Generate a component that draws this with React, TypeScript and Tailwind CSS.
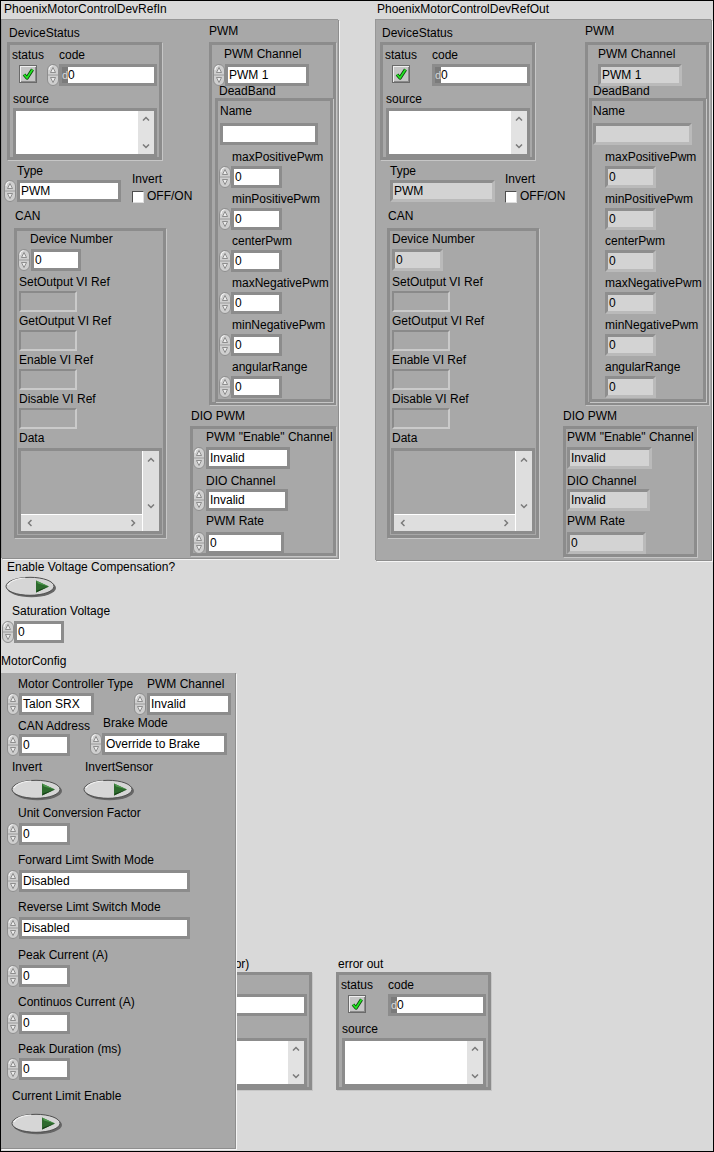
import React from 'react'

const NUMS = ['maxPositivePwm', 'minPositivePwm', 'centerPwm', 'maxNegativePwm', 'minNegativePwm', 'angularRange']

function Lbl({ children, className = '' }: { children?: React.ReactNode; className?: string }) {
  return (
    <div className={`h-[15px] shrink-0 whitespace-nowrap text-[12px] leading-[15px] text-black ${className}`}>
      {children}
    </div>
  )
}

function Spin() {
  return (
    <svg width="12" height="22" viewBox="0 0 12 22" className="shrink-0">
      <rect x="0.5" y="0.5" width="11" height="21" rx="5.5" fill="#cfcfcf" stroke="#8e8e8e" />
      <path d="M2 6 Q2 2 5.5 1.5" stroke="#f6f6f6" fill="none" />
      <line x1="1" y1="11" x2="11" y2="11" stroke="#9c9c9c" />
      <path d="M6 3.5 L8.5 8.5 L3.5 8.5 Z" fill="#ececec" stroke="#7a7a7a" strokeWidth="0.8" />
      <path d="M6 18.5 L8.5 13.5 L3.5 13.5 Z" fill="#ececec" stroke="#7a7a7a" strokeWidth="0.8" />
    </svg>
  )
}

function Field({ text = '', ind, className = '' }: { text?: string; ind?: boolean; className?: string }) {
  return (
    <div
      className={`h-[22px] shrink-0 overflow-hidden whitespace-nowrap border-[3px] pl-[1px] text-[12px] leading-[16px] text-black ${
        ind
          ? 'border-t-[#8e8e8e] border-l-[#8e8e8e] border-r-[#bababa] border-b-[#bababa] bg-[#d3d3d3]'
          : 'border-[#8c8c8c] bg-white'
      } ${className}`}
    >
      {text}
    </div>
  )
}

function Refnum() {
  return (
    <div className="ml-[2px] mt-[1px] h-[21px] w-[58px] border-2 border-t-[#8a8a8a] border-l-[#8a8a8a] border-r-[#cacaca] border-b-[#cacaca]" />
  )
}

function ChevUp() {
  return (
    <svg width="8" height="5" viewBox="0 0 8 5">
      <path d="M1 4.5 L4 1.5 L7 4.5" stroke="#7a7a7a" strokeWidth="1.5" fill="none" />
    </svg>
  )
}

function ChevDown() {
  return (
    <svg width="8" height="5" viewBox="0 0 8 5">
      <path d="M1 0.5 L4 3.5 L7 0.5" stroke="#7a7a7a" strokeWidth="1.5" fill="none" />
    </svg>
  )
}

function ChevLeft() {
  return (
    <svg width="5" height="8" viewBox="0 0 5 8">
      <path d="M4.5 1 L1.5 4 L4.5 7" stroke="#7a7a7a" strokeWidth="1.5" fill="none" />
    </svg>
  )
}

function ChevRight() {
  return (
    <svg width="5" height="8" viewBox="0 0 5 8">
      <path d="M0.5 1 L3.5 4 L0.5 7" stroke="#7a7a7a" strokeWidth="1.5" fill="none" />
    </svg>
  )
}

function StatusLed() {
  return (
    <div className="h-[18px] w-[18px] border border-[#6a6a6a] bg-[#c6c6c6] shadow-[inset_1px_1px_0_#f0f0f0,inset_-1px_-1px_0_#8a8a8a]">
      <svg width="16" height="16" viewBox="0 0 16 16">
        <path d="M4 8.5 L7 12 L12.5 3.5" stroke="#0b4a0b" strokeWidth="3.4" fill="none" strokeLinejoin="round" />
        <path d="M4 8.5 L7 12 L12.5 3.5" stroke="#22e622" strokeWidth="1.7" fill="none" strokeLinejoin="round" />
      </svg>
    </div>
  )
}

function Oval({ className = '' }: { className?: string }) {
  return (
    <svg width="52" height="22" viewBox="0 0 52 22" className={`shrink-0 ${className}`}>
      <ellipse cx="26.5" cy="12" rx="24.5" ry="9.2" fill="#666666" />
      <ellipse cx="25" cy="10.3" rx="24" ry="9" fill="#d6d6d6" stroke="#4e4e4e" />
      <path d="M3 9 Q6 3 20 2" stroke="#f4f4f4" strokeWidth="1.2" fill="none" />
      <path d="M31 4.5 L44 10.5 L31 16.5 Z" fill="#2d6a2d" />
      <path d="M31 4.5 L44 10.5 L33 7.5 Z" fill="#4e9a4e" />
      <path d="M31 16.5 L44 10.5 L32 14.5 Z" fill="#173f17" />
    </svg>
  )
}

function CheckBox() {
  return (
    <div className="h-[12px] w-[12px] border border-t-[#4e4e4e] border-l-[#4e4e4e] border-r-[#dedede] border-b-[#dedede] bg-white" />
  )
}

function CodeField() {
  return (
    <div className="flex h-[22px] w-[98px] shrink-0 border-[3px] border-[#8c8c8c] bg-white">
      <div className="w-[6px] overflow-hidden bg-[#7b7b7b] text-[11px] leading-[16px] text-[#d6d6d6]">d</div>
      <div className="text-[12px] leading-[16px] text-black">0</div>
    </div>
  )
}

function SourceBox() {
  return (
    <div className="flex h-[49px] w-[144px] border-[3px] border-[#8c8c8c] bg-white">
      <div className="flex-1" />
      <div className="flex w-[16px] flex-col items-center justify-between bg-[#e2e2e2] py-[5px]">
        <ChevUp />
        <ChevDown />
      </div>
    </div>
  )
}

function DataBox() {
  return (
    <div className="ml-[1px] mt-[2px] flex h-[86px] w-[144px] border-[3px] border-[#8c8c8c] bg-[#a8a8a8]">
      <div className="flex flex-1 flex-col">
        <div className="flex-1" />
        <div className="flex h-[17px] items-center justify-between border-t border-white bg-[#dedede] px-[6px]">
          <ChevLeft />
          <ChevRight />
        </div>
      </div>
      <div className="flex w-[17px] flex-col items-center justify-between border-l border-white bg-[#dedede] pb-[22px] pt-[6px]">
        <ChevUp />
        <ChevDown />
      </div>
    </div>
  )
}

function ErrorCluster({ ctl }: { ctl?: boolean }) {
  return (
    <div className="h-[118px] w-[155px] border-[3px] border-[#8c8c8c] bg-[#a8a8a8] shadow-[1px_1px_0_#c6c6c6]">
      <div className="ml-[2px] mt-[3px] flex">
        <Lbl className="w-[47px]">status</Lbl>
        <Lbl>code</Lbl>
      </div>
      <div className="mt-[1px] flex items-start">
        <div className="ml-[9px] mt-[1px]">
          <StatusLed />
        </div>
        {ctl ? (
          <div className="ml-[10px] flex">
            <Spin />
            <CodeField />
          </div>
        ) : (
          <div className="ml-[22px]">
            <CodeField />
          </div>
        )}
      </div>
      <Lbl className="ml-[3px] mt-[6px]">source</Lbl>
      <div className="ml-[3px] mt-[1px]">
        <SourceBox />
      </div>
    </div>
  )
}

function InvertBox({ className = '' }: { className?: string }) {
  return (
    <div className={`flex flex-col ${className}`}>
      <Lbl className="mt-[8px]">Invert</Lbl>
      <div className="mt-[2px] flex items-center">
        <CheckBox />
        <Lbl className="ml-[3px]">OFF/ON</Lbl>
      </div>
    </div>
  )
}

function CanRefs() {
  return (
    <>
      {['SetOutput VI Ref', 'GetOutput VI Ref', 'Enable VI Ref', 'Disable VI Ref'].map((n, i) => (
        <React.Fragment key={n}>
          <Lbl className={i === 0 ? 'ml-[2px] mt-[4px]' : 'ml-[2px] mt-[2px]'}>{n}</Lbl>
          <Refnum />
        </React.Fragment>
      ))}
      <Lbl className="ml-[2px] mt-[2px]">Data</Lbl>
      <DataBox />
    </>
  )
}

const BOX = 'border-[3px] border-[#8c8c8c] shadow-[1px_1px_0_#c6c6c6]'

function DevRefIn() {
  return (
    <div className="flex flex-col">
      <Lbl className="ml-[3px] mt-[1px]">PhoenixMotorControlDevRefIn</Lbl>
      <div className="mt-[2px] flex h-[539px] w-[337px] border-l border-t border-[#979797] bg-[#a8a8a8] shadow-[1px_1px_0_#8e8e8e,2px_2px_0_#f5f5f5]">
        {/* left column */}
        <div className="flex w-[164px] shrink-0 flex-col">
          <Lbl className="ml-[7px] mt-[6px]">DeviceStatus</Lbl>
          <div className="ml-[5px] mt-[1px]">
            <ErrorCluster ctl />
          </div>
          <div className="ml-[2px] mt-[4px] flex items-start">
            <div className="flex flex-col">
              <Lbl className="ml-[13px]">Type</Lbl>
              <div className="mt-[1px] flex">
                <Spin />
                <Field text="PWM" className="ml-[1px] w-[104px]" />
              </div>
            </div>
            <InvertBox className="ml-[11px]" />
          </div>
          <Lbl className="ml-[13px] mt-[5px]">CAN</Lbl>
          <div className={`ml-[12px] mt-[4px] flex h-[310px] w-[152px] flex-col ${BOX}`}>
            <Lbl className="ml-[13px] mt-[1px]">Device Number</Lbl>
            <div className="ml-[1px] mt-[2px] flex">
              <Spin />
              <Field text="0" className="ml-[1px] w-[50px]" />
            </div>
            <CanRefs />
          </div>
        </div>

        {/* right column */}
        <div className="ml-[24px] flex flex-col">
          <Lbl className="ml-[19px] mt-[4px]">PWM</Lbl>
          <div className={`ml-[19px] mt-[3px] flex h-[363px] w-[127px] flex-col ${BOX}`}>
            <Lbl className="ml-[12px] mt-[2px]">PWM Channel</Lbl>
            <div className="ml-[1px] mt-[2px] flex">
              <Spin />
              <Field text="PWM 1" className="w-[84px]" />
            </div>
            <Lbl className="ml-[7px] mt-[-2px]">DeadBand</Lbl>
            <div className={`ml-[3px] mt-[-1px] flex h-[305px] w-[118px] flex-col ${BOX}`}>
              <Lbl className="ml-[2px] mt-[3px]">Name</Lbl>
              <Field className="ml-[2px] mt-[4px] w-[98px]" />
              {NUMS.map((n, i) => (
                <React.Fragment key={n}>
                  <Lbl className={i === 0 ? 'ml-[14px] mt-[5px]' : 'ml-[14px] mt-[4px]'}>{n}</Lbl>
                  <div className="ml-[1px] mt-[1px] flex">
                    <Spin />
                    <Field text="0" className="w-[51px]" />
                  </div>
                </React.Fragment>
              ))}
            </div>
          </div>
          <Lbl className="ml-[1px] mt-[4px]">DIO PWM</Lbl>
          <div className={`mt-[2px] flex h-[130px] w-[146px] flex-col ${BOX}`}>
            <Lbl className="ml-[13px] mt-[1px]">{'PWM "Enable" Channel'}</Lbl>
            <div className="mt-[2px] flex">
              <Spin />
              <Field text="Invalid" className="ml-[1px] w-[84px]" />
            </div>
            <Lbl className="ml-[13px] mt-[5px]">DIO Channel</Lbl>
            <div className="flex">
              <Spin />
              <Field text="Invalid" className="ml-[1px] w-[82px]" />
            </div>
            <Lbl className="ml-[13px] mt-[3px]">PWM Rate</Lbl>
            <div className="mt-[3px] flex">
              <Spin />
              <Field text="0" className="ml-[1px] w-[78px]" />
            </div>
          </div>
        </div>
      </div>
    </div>
  )
}

function DevRefOut() {
  return (
    <div className="ml-[37px] flex flex-col">
      <Lbl className="ml-[2px] mt-[1px]">PhoenixMotorControlDevRefOut</Lbl>
      <div className="mt-[2px] flex h-[541px] w-[336px] border-l border-t border-[#979797] bg-[#a8a8a8] shadow-[1px_1px_0_#8e8e8e,2px_2px_0_#f5f5f5]">
        {/* left column */}
        <div className="flex w-[163px] shrink-0 flex-col">
          <Lbl className="ml-[6px] mt-[6px]">DeviceStatus</Lbl>
          <div className="ml-[4px] mt-[1px]">
            <ErrorCluster />
          </div>
          <div className="ml-[14px] mt-[4px] flex items-start">
            <div className="flex flex-col">
              <Lbl>Type</Lbl>
              <Field ind text="PWM" className="mt-[1px] w-[105px]" />
            </div>
            <InvertBox className="ml-[10px]" />
          </div>
          <Lbl className="ml-[12px] mt-[5px]">CAN</Lbl>
          <div className={`ml-[11px] mt-[4px] flex h-[310px] w-[152px] flex-col ${BOX}`}>
            <Lbl className="ml-[2px] mt-[1px]">Device Number</Lbl>
            <Field ind text="0" className="ml-[2px] mt-[2px] w-[51px]" />
            <CanRefs />
          </div>
        </div>

        {/* right column */}
        <div className="ml-[24px] flex flex-col">
          <Lbl className="ml-[22px] mt-[4px]">PWM</Lbl>
          <div className={`ml-[22px] mt-[3px] flex h-[363px] w-[124px] flex-col ${BOX}`}>
            <Lbl className="ml-[10px] mt-[2px]">PWM Channel</Lbl>
            <Field ind text="PWM 1" className="ml-[10px] mt-[2px] w-[84px]" />
            <Lbl className="ml-[5px] mt-[-2px]">DeadBand</Lbl>
            <div className={`ml-[1px] mt-[-1px] flex h-[305px] w-[117px] flex-col ${BOX}`}>
              <Lbl className="ml-[1px] mt-[3px]">Name</Lbl>
              <Field ind className="ml-[1px] mt-[4px] w-[99px]" />
              {NUMS.map((n, i) => (
                <React.Fragment key={n}>
                  <Lbl className={i === 0 ? 'ml-[13px] mt-[5px]' : 'ml-[13px] mt-[4px]'}>{n}</Lbl>
                  <Field ind text="0" className="ml-[13px] mt-[1px] w-[51px]" />
                </React.Fragment>
              ))}
            </div>
          </div>
          <Lbl className="mt-[4px]">DIO PWM</Lbl>
          <div className={`mt-[2px] flex h-[131px] w-[134px] flex-col ${BOX}`}>
            <Lbl className="ml-[1px] mt-[1px]">{'PWM "Enable" Channel'}</Lbl>
            <Field ind text="Invalid" className="ml-[1px] mt-[2px] w-[85px]" />
            <Lbl className="ml-[1px] mt-[5px]">DIO Channel</Lbl>
            <Field ind text="Invalid" className="ml-[1px] w-[83px]" />
            <Lbl className="ml-[1px] mt-[3px]">PWM Rate</Lbl>
            <Field ind text="0" className="ml-[1px] mt-[3px] w-[79px]" />
          </div>
        </div>
      </div>
    </div>
  )
}

function NumRow({ text = '0', w, className = '' }: { text?: string; w: string; className?: string }) {
  return (
    <div className={`ml-[6px] flex ${className}`}>
      <Spin />
      <Field text={text} className={w} />
    </div>
  )
}

function MotorConfig() {
  return (
    <div className="relative z-10 mt-[4px] flex h-[476px] w-[235px] flex-col border-b border-r border-[#8e8e8e] bg-[#a8a8a8] shadow-[1px_1px_0_#f5f5f5]">
      <div className="mt-[4px] flex items-start">
        <div className="flex w-[93px] shrink-0 flex-col">
          <Lbl className="ml-[17px]">Motor Controller Type</Lbl>
          <NumRow text="Talon SRX" w="w-[75px]" className="mt-[1px]" />
        </div>
        <div className="ml-[40px] flex flex-col">
          <Lbl className="ml-[13px]">PWM Channel</Lbl>
          <div className="mt-[1px] flex">
            <Spin />
            <Field text="Invalid" className="ml-[1px] w-[84px]" />
          </div>
        </div>
      </div>
      <div className="mt-[1px] flex items-start">
        <div className="flex w-[69px] shrink-0 flex-col">
          <Lbl className="ml-[17px] mt-[3px]">CAN Address</Lbl>
          <NumRow w="w-[51px]" />
        </div>
        <div className="ml-[20px] flex flex-col">
          <Lbl className="ml-[13px]">Brake Mode</Lbl>
          <div className="mt-[2px] flex">
            <Spin />
            <Field text="Override to Brake" className="w-[125px]" />
          </div>
        </div>
      </div>
      <div className="mt-[4px] flex items-start">
        <div className="flex w-[62px] shrink-0 flex-col">
          <Lbl className="ml-[11px]">Invert</Lbl>
          <Oval className="ml-[10px] mt-[4px]" />
        </div>
        <div className="ml-[20px] flex flex-col">
          <Lbl className="ml-[2px]">InvertSensor</Lbl>
          <Oval className="mt-[4px]" />
        </div>
      </div>
      <Lbl className="ml-[17px] mt-[5px]">Unit Conversion Factor</Lbl>
      <NumRow w="w-[51px]" className="mt-[2px]" />
      <Lbl className="ml-[17px] mt-[8px]">Forward Limt Swith Mode</Lbl>
      <NumRow text="Disabled" w="w-[171px]" className="mt-[2px]" />
      <Lbl className="ml-[17px] mt-[8px]">Reverse Limt Switch Mode</Lbl>
      <NumRow text="Disabled" w="w-[171px]" className="mt-[2px]" />
      <Lbl className="ml-[17px] mt-[9px]">Peak Current (A)</Lbl>
      <NumRow w="w-[51px]" className="mt-[2px]" />
      <Lbl className="ml-[17px] mt-[8px]">Continuos Current (A)</Lbl>
      <NumRow w="w-[51px]" className="mt-[2px]" />
      <Lbl className="ml-[17px] mt-[8px]">Peak Duration (ms)</Lbl>
      <NumRow w="w-[51px]" className="mt-[1px]" />
      <Lbl className="ml-[11px] mt-[9px]">Current Limit Enable</Lbl>
      <Oval className="ml-[10px] mt-[9px]" />
    </div>
  )
}

export default function App() {
  return (
    <div className="relative h-[1152px] w-[714px] overflow-hidden border border-black bg-[#d9d9d9] font-['Liberation_Sans',Arial,sans-serif] text-black">
      <div className="flex h-[559px] items-start">
        <DevRefIn />
        <DevRefOut />
      </div>

      <Lbl className="ml-[6px]">Enable Voltage Compensation?</Lbl>
      <Oval className="ml-[4px] mt-[1px]" />
      <Lbl className="ml-[11px] mt-[6px]">Saturation Voltage</Lbl>
      <div className="ml-[1px] mt-[2px] flex">
        <Spin />
        <Field text="0" className="w-[50px]" />
      </div>
      <Lbl className="mt-[11px]">MotorConfig</Lbl>
      <MotorConfig />

      {/* error clusters sit on the panel canvas, error in is partly hidden under MotorConfig */}
      <div className="absolute left-[156px] top-[956px] flex flex-col">
        <Lbl className="ml-[1px]">error in (no error)</Lbl>
        <ErrorCluster ctl />
      </div>
      <div className="absolute left-[335px] top-[956px] flex flex-col">
        <Lbl className="ml-[2px]">error out</Lbl>
        <ErrorCluster />
      </div>
    </div>
  )
}
